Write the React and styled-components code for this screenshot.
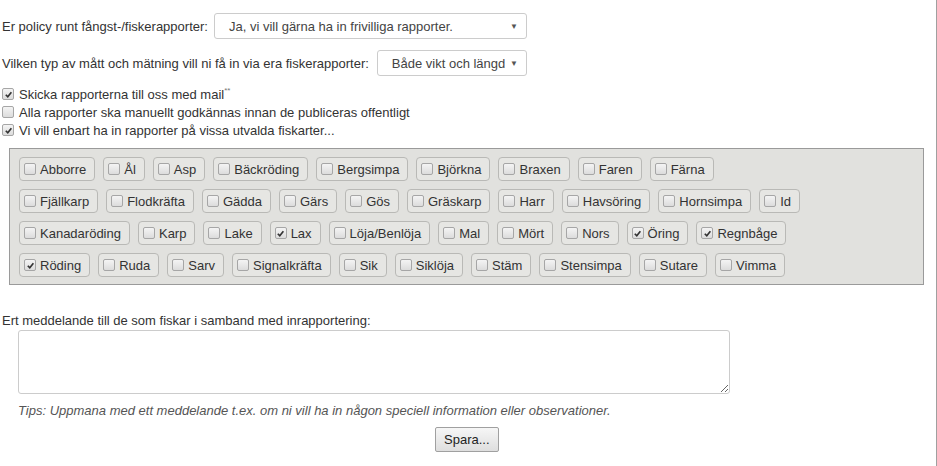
import React from 'react';
import styled, { createGlobalStyle } from 'styled-components';

const GlobalStyle = createGlobalStyle`
  html, body {
    margin: 0;
    padding: 0;
    background: #fff;
  }
  body {
    font-family: "Liberation Sans", Arial, sans-serif;
    font-size: 13px;
    color: #333;
  }
`;

// arter grupperade per rad, som i originalet
const SPECIES_ROWS = [
  [['Abborre'], ['Ål'], ['Asp'], ['Bäckröding'], ['Bergsimpa'], ['Björkna'], ['Braxen'], ['Faren'], ['Färna']],
  [['Fjällkarp'], ['Flodkräfta'], ['Gädda'], ['Gärs'], ['Gös'], ['Gräskarp'], ['Harr'], ['Havsöring'], ['Hornsimpa'], ['Id']],
  [['Kanadaröding'], ['Karp'], ['Lake'], ['Lax', true], ['Löja/Benlöja'], ['Mal'], ['Mört'], ['Nors'], ['Öring', true], ['Regnbåge', true]],
  [['Röding', true], ['Ruda'], ['Sarv'], ['Signalkräfta'], ['Sik'], ['Siklöja'], ['Stäm'], ['Stensimpa'], ['Sutare'], ['Vimma']],
];

function Check({ checked }) {
  return <Box>{checked && <Tick viewBox="0 0 10 10"><path d="M2 5.2 L4.2 7.6 L8.2 2.4" /></Tick>}</Box>;
}

function Select({ value, width }) {
  return (
    <SelectBox $width={width}>
      <span>{value}</span>
      <Arrow>▼</Arrow>
    </SelectBox>
  );
}

export default function App() {
  return (
    <Page>
      <GlobalStyle />
      <FieldRow $top={13}>
        <Label>Er policy runt fångst-/fiskerapporter:</Label>
        <Select value="Ja, vi vill gärna ha in frivilliga rapporter." width={313} />
      </FieldRow>
      <FieldRow $top={11}>
        <Label>Vilken typ av mått och mätning vill ni få in via era fiskerapporter:</Label>
        <Select value="Både vikt och längd" width={150} />
      </FieldRow>

      <Options>
        <Option>
          <Check checked />
          <span>Skicka rapporterna till oss med mail<Sup>**</Sup></span>
        </Option>
        <Option>
          <Check />
          <span>Alla rapporter ska manuellt godkännas innan de publiceras offentligt</span>
        </Option>
        <Option>
          <Check checked />
          <span>Vi vill enbart ha in rapporter på vissa utvalda fiskarter...</span>
        </Option>
      </Options>

      <SpeciesPanel>
        {SPECIES_ROWS.map((row, i) => (
          <SpeciesRow key={i}>
            {row.map(([name, checked]) => (
              <Tag key={name}>
                <Check checked={checked} />
                <span>{name}</span>
              </Tag>
            ))}
          </SpeciesRow>
        ))}
      </SpeciesPanel>

      <MessageLabel>Ert meddelande till de som fiskar i samband med inrapportering:</MessageLabel>
      <Indented>
        <TextArea />
        <Tips>Tips: Uppmana med ett meddelande t.ex. om ni vill ha in någon speciell information eller observationer.</Tips>
      </Indented>
      <Actions>
        <SaveButton>Spara...</SaveButton>
      </Actions>
    </Page>
  );
}

const Page = styled.div`
  box-sizing: border-box;
  width: 937px;
  min-height: 466px;
  padding: 0 0 0 2px;
  border-right: 1px solid #a0a0a0;
  overflow: hidden;
`;

const FieldRow = styled.div`
  display: flex;
  align-items: center;
  gap: 6px;
  margin-top: ${p => p.$top}px;

  & + & {
    gap: 8px;
  }
`;

const Label = styled.span`
  color: #333;
  white-space: nowrap;
`;

const SelectBox = styled.div`
  box-sizing: border-box;
  width: ${p => p.$width}px;
  height: 26px;
  display: flex;
  align-items: center;
  justify-content: space-between;
  padding: 0 8px 0 14px;
  border: 1px solid #ccc;
  border-radius: 3px;
  background: #fff;
  color: #444;
  white-space: nowrap;
`;

const Arrow = styled.span`
  font-size: 8px;
  color: #555;
`;

const Options = styled.div`
  display: flex;
  flex-direction: column;
  margin-top: 9px;
`;

const Option = styled.label`
  display: flex;
  align-items: center;
  gap: 5px;
  height: 18px;
`;

const Sup = styled.sup`
  font-size: 8px;
  vertical-align: 6px;
  line-height: 0;
  color: #777;
`;

const Box = styled.span`
  box-sizing: border-box;
  flex: none;
  width: 12px;
  height: 12px;
  border: 1px solid #a6a6a6;
  border-radius: 2px;
  background: linear-gradient(#f4f4f4, #dcdcdc);
  display: inline-flex;
  align-items: center;
  justify-content: center;
`;

const Tick = styled.svg`
  width: 9px;
  height: 9px;
  fill: none;
  stroke: #333;
  stroke-width: 1.8;
`;

const SpeciesPanel = styled.div`
  box-sizing: border-box;
  width: 915px;
  margin: 9px 0 0 7px;
  padding: 8px 9px 7px;
  border: 1px solid #9a9a9a;
  background: #e1e1de;
  display: flex;
  flex-direction: column;
  gap: 8px;
`;

const SpeciesRow = styled.div`
  display: flex;
  gap: 8px;
`;

const Tag = styled.label`
  box-sizing: border-box;
  height: 24px;
  display: inline-flex;
  align-items: center;
  gap: 4px;
  padding: 0 8px 0 4px;
  border: 1px solid #b9b9b6;
  border-radius: 4px;
  background: #e6e6e3;
  color: #333;
`;

const MessageLabel = styled.div`
  margin-top: 28px;
`;

const Indented = styled.div`
  padding-left: 16px;
`;

const TextArea = styled.textarea`
  box-sizing: border-box;
  display: block;
  width: 712px;
  height: 64px;
  margin-top: 2px;
  border: 1px solid #ccc;
  border-radius: 3px;
  resize: vertical;
  font: inherit;
`;

const Tips = styled.div`
  margin-top: 9px;
  font-size: 13px;
  font-style: italic;
  color: #555;
`;

const Actions = styled.div`
  display: flex;
  justify-content: flex-start;
  padding-left: 433px;
  margin-top: 9px;
`;

const SaveButton = styled.button`
  box-sizing: border-box;
  height: 25px;
  padding: 0 8px;
  border: 1px solid #a0a0a0;
  border-radius: 2px;
  background: linear-gradient(#f6f6f6, #dedede);
  font-family: "Liberation Sans", Arial, sans-serif;
  font-size: 13px;
  color: #222;
`;
